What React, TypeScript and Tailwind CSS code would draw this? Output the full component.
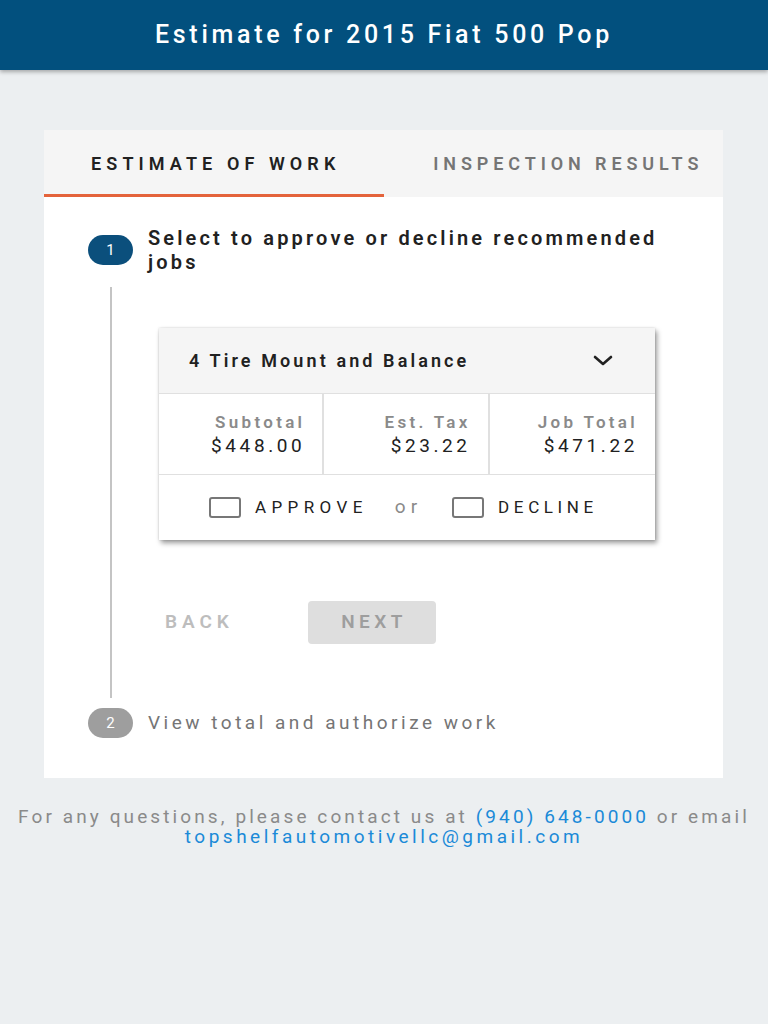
function StepDot({n, active}: {n: number; active: boolean}) {
    return (
        <div
            className={`w-[45px] h-[30px] shrink-0 rounded-full flex items-center justify-center text-white text-[15px] ${
                active ? "bg-[#0b4f7c]" : "bg-[#9e9e9e]"
            }`}
        >
            {n}
        </div>
    );
}

function Checkbox() {
    return <span className="w-[32px] h-[21px] rounded-[3px] border-2 border-[#777777] shrink-0"/>;
}

export default function App() {
    return (
        <div className="min-h-screen bg-[#eceff1] font-['Roboto',sans-serif] text-[#212121]">
            <header className="h-[70px] bg-[#02507e] flex items-center justify-center shadow-[0_2px_4px_rgba(0,0,0,0.3)]">
                <h1 className="text-white text-[25px] font-medium tracking-[3.7px]">Estimate for 2015 Fiat 500 Pop</h1>
            </header>

            <main className="pl-[44px] pr-[45px] pt-[60px]">
                <div className="bg-white">
                    {/* tabs */}
                    <div className="grid grid-cols-2 h-[67px] bg-[#f5f5f5]">
                        <div className="flex items-center justify-center border-b-[3px] border-[#e4633b] pt-[3px] pl-[4px] font-semibold text-[18px] tracking-[5.1px] text-[#212121]">
                            ESTIMATE OF WORK
                        </div>
                        <div className="flex items-center justify-center pl-[30px] font-semibold text-[18px] tracking-[4.9px] text-[#757575] whitespace-nowrap">
                            INSPECTION RESULTS
                        </div>
                    </div>

                    <div className="pl-[44px] pr-[40px] pt-[29px] pb-[40px]">
                        {/* step 1 */}
                        <div className="flex items-center gap-[15px]">
                            <StepDot n={1} active/>
                            <p className="text-[20px] leading-[24px] font-semibold tracking-[3.15px]">
                                Select to approve or decline recommended jobs
                            </p>
                        </div>

                        <div className="flex mt-[13px]">
                            <div className="w-[45px] flex justify-center shrink-0">
                                <div className="w-[2px] bg-[#c4c4c4]"/>
                            </div>
                            <div className="flex-1 pl-[26px] pr-[28px] pt-[41px] pb-[54px]">
                                <div className="bg-white shadow-[2px_3px_5px_rgba(0,0,0,0.4),0_0_2px_rgba(0,0,0,0.15)]">
                                    <div className="h-[65px] bg-[#f5f5f5] flex items-center justify-between pl-[30px] pr-[42px]">
                                        <span className="text-[18px] font-semibold tracking-[3.1px]">4 Tire Mount and Balance</span>
                                        <svg width="20" height="11" viewBox="0 0 20 11" fill="none" stroke="#212121" strokeWidth="2.6" strokeLinecap="round" strokeLinejoin="round">
                                            <path d="M2 2l8 7 8-7"/>
                                        </svg>
                                    </div>
                                    <div className="grid grid-cols-3 h-[81px] border-t border-[#e0e0e0]">
                                        {[
                                            {label: "Subtotal", value: "$448.00"},
                                            {label: "Est. Tax", value: "$23.22"},
                                            {label: "Job Total", value: "$471.22"},
                                        ].map((c, i) => (
                                            <div
                                                key={c.label}
                                                className={`flex flex-col items-end justify-center pr-[17px] ${
                                                    i < 2 ? "border-r-2 border-[#e0e0e0]" : ""
                                                }`}
                                            >
                                                <span className="text-[17px] leading-[24px] font-semibold text-[#8a8a8a] tracking-[3.3px]">
                                                    {c.label}
                                                </span>
                                                <span className="text-[19px] leading-[24px] tracking-[3.6px]">{c.value}</span>
                                            </div>
                                        ))}
                                    </div>
                                    <div className="h-[66px] border-t border-[#e0e0e0] flex items-center pl-[50px]">
                                        <Checkbox/>
                                        <span className="ml-[14px] text-[17px] tracking-[5.4px]">APPROVE</span>
                                        <span className="ml-[27px] text-[19px] tracking-[5px] text-[#8a8a8a]">or</span>
                                        <span className="ml-[30px] flex"><Checkbox/></span>
                                        <span className="ml-[14px] text-[17px] tracking-[4.6px]">DECLINE</span>
                                    </div>
                                </div>

                                <div className="flex items-center mt-[61px]">
                                    <div className="w-[149px] pl-[6px] text-[19px] font-semibold tracking-[4.9px] text-[#bdbdbd]">
                                        BACK
                                    </div>
                                    <div className="w-[128px] h-[43px] rounded-[4px] bg-[#dedede] flex items-center justify-center pl-[4px] text-[19px] font-semibold tracking-[4.4px] text-[#9e9e9e]">
                                        NEXT
                                    </div>
                                </div>
                            </div>
                        </div>

                        {/* step 2 */}
                        <div className="flex items-center gap-[15px] mt-[10px]">
                            <StepDot n={2} active={false}/>
                            <p className="text-[19px] leading-[24px] tracking-[3.5px] text-[#757575]">
                                View total and authorize work
                            </p>
                        </div>
                    </div>
                </div>

                <p className="mt-[29px] -ml-[44px] -mr-[45px] text-center text-[19px] leading-[20px] tracking-[3.1px] text-[#8a8a8a] whitespace-nowrap">
                    For any questions, please contact us at <span className="text-[#1b8ad8]">(940) 648-0000</span> or email
                    <br/>
                    <span className="text-[#1b8ad8] tracking-[3.5px]">topshelfautomotivellc@gmail.com</span>
                </p>
            </main>
        </div>
    );
}
